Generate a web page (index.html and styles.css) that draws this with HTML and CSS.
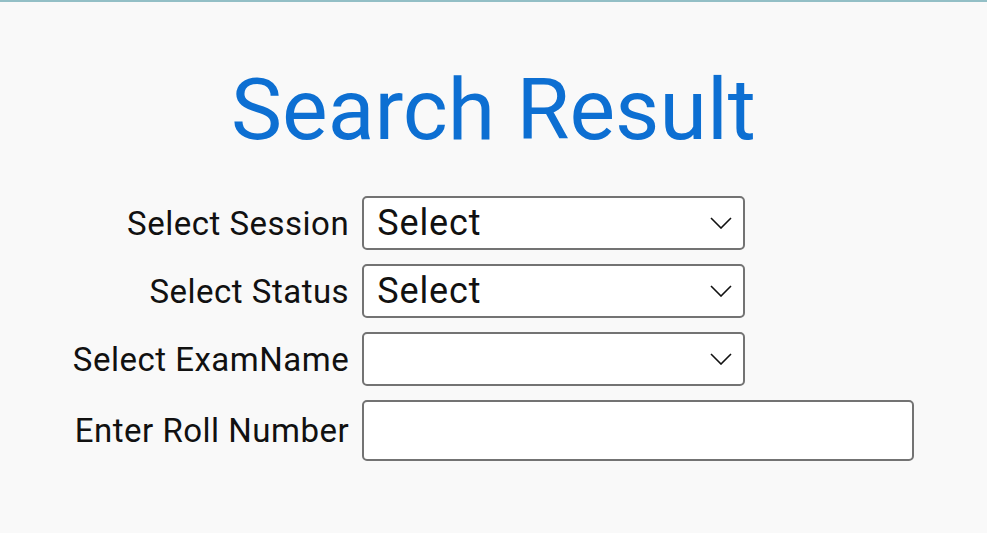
FILE: index.html
```html
<!DOCTYPE html>
<html lang="en">

<head>
    <meta charset="UTF-8">
    <meta name="viewport" content="width=device-width, initial-scale=1.0">
    <title>Search Result</title>
    <link rel="stylesheet" href="styles.css">
</head>

<body>
    <div class="page">
        <h1 class="title">Search Result</h1>
        <!-- 查询表单 -->
        <form class="search_form">
            <label class="label" for="session">Select Session</label>
            <span class="select_wrap">
                <select id="session" class="field">
                    <option>Select</option>
                </select>
                <svg class="arrow" width="22" height="12" viewBox="0 0 22 12">
                    <path d="M1 1 L11 11 L21 1" fill="none" stroke="#111" stroke-width="1.6" />
                </svg>
            </span>

            <label class="label" for="status">Select Status</label>
            <span class="select_wrap">
                <select id="status" class="field">
                    <option>Select</option>
                </select>
                <svg class="arrow" width="22" height="12" viewBox="0 0 22 12">
                    <path d="M1 1 L11 11 L21 1" fill="none" stroke="#111" stroke-width="1.6" />
                </svg>
            </span>

            <label class="label" for="exam">Select ExamName</label>
            <span class="select_wrap">
                <select id="exam" class="field">
                    <option></option>
                </select>
                <svg class="arrow" width="22" height="12" viewBox="0 0 22 12">
                    <path d="M1 1 L11 11 L21 1" fill="none" stroke="#111" stroke-width="1.6" />
                </svg>
            </span>

            <label class="label" for="roll">Enter Roll Number</label>
            <input id="roll" class="field roll" type="text">
        </form>
    </div>
</body>

</html>
```

FILE: styles.css
```css
* {
    margin: 0;
    padding: 0;
    box-sizing: border-box;
}

body {
    background-color: #f9f9f9;
    border-top: 2px solid #93bfc6;
    font-family: Roboto, "Liberation Sans", sans-serif;
    color: #111;
}

.page {
    padding-top: 65px;
}

.title {
    font-size: 86px;
    font-weight: 400;
    line-height: 1;
    text-align: center;
    color: #0d6fd2;
}

.search_form {
    display: grid;
    grid-template-columns: auto auto;
    justify-content: center;
    align-items: center;
    column-gap: 13px;
    row-gap: 14px;
    margin-top: 43px;
}

.label {
    justify-self: end;
    font-size: 33px;
    letter-spacing: 0.5px;
}

.select_wrap {
    position: relative;
    display: block;
    width: 383px;
}

.field {
    display: block;
    width: 383px;
    height: 54px;
    padding: 0 44px 0 13px;
    border: 2.5px solid #737373;
    border-radius: 5px;
    background-color: #fff;
    font-family: Roboto, "Liberation Sans", sans-serif;
    font-size: 36px;
    letter-spacing: 0.9px;
    color: #111;
    appearance: none;
    -webkit-appearance: none;
    outline: none;
}

.arrow {
    position: absolute;
    right: 13px;
    top: 21px;
    pointer-events: none;
}

.roll {
    width: 552px;
    height: 61px;
}
```
